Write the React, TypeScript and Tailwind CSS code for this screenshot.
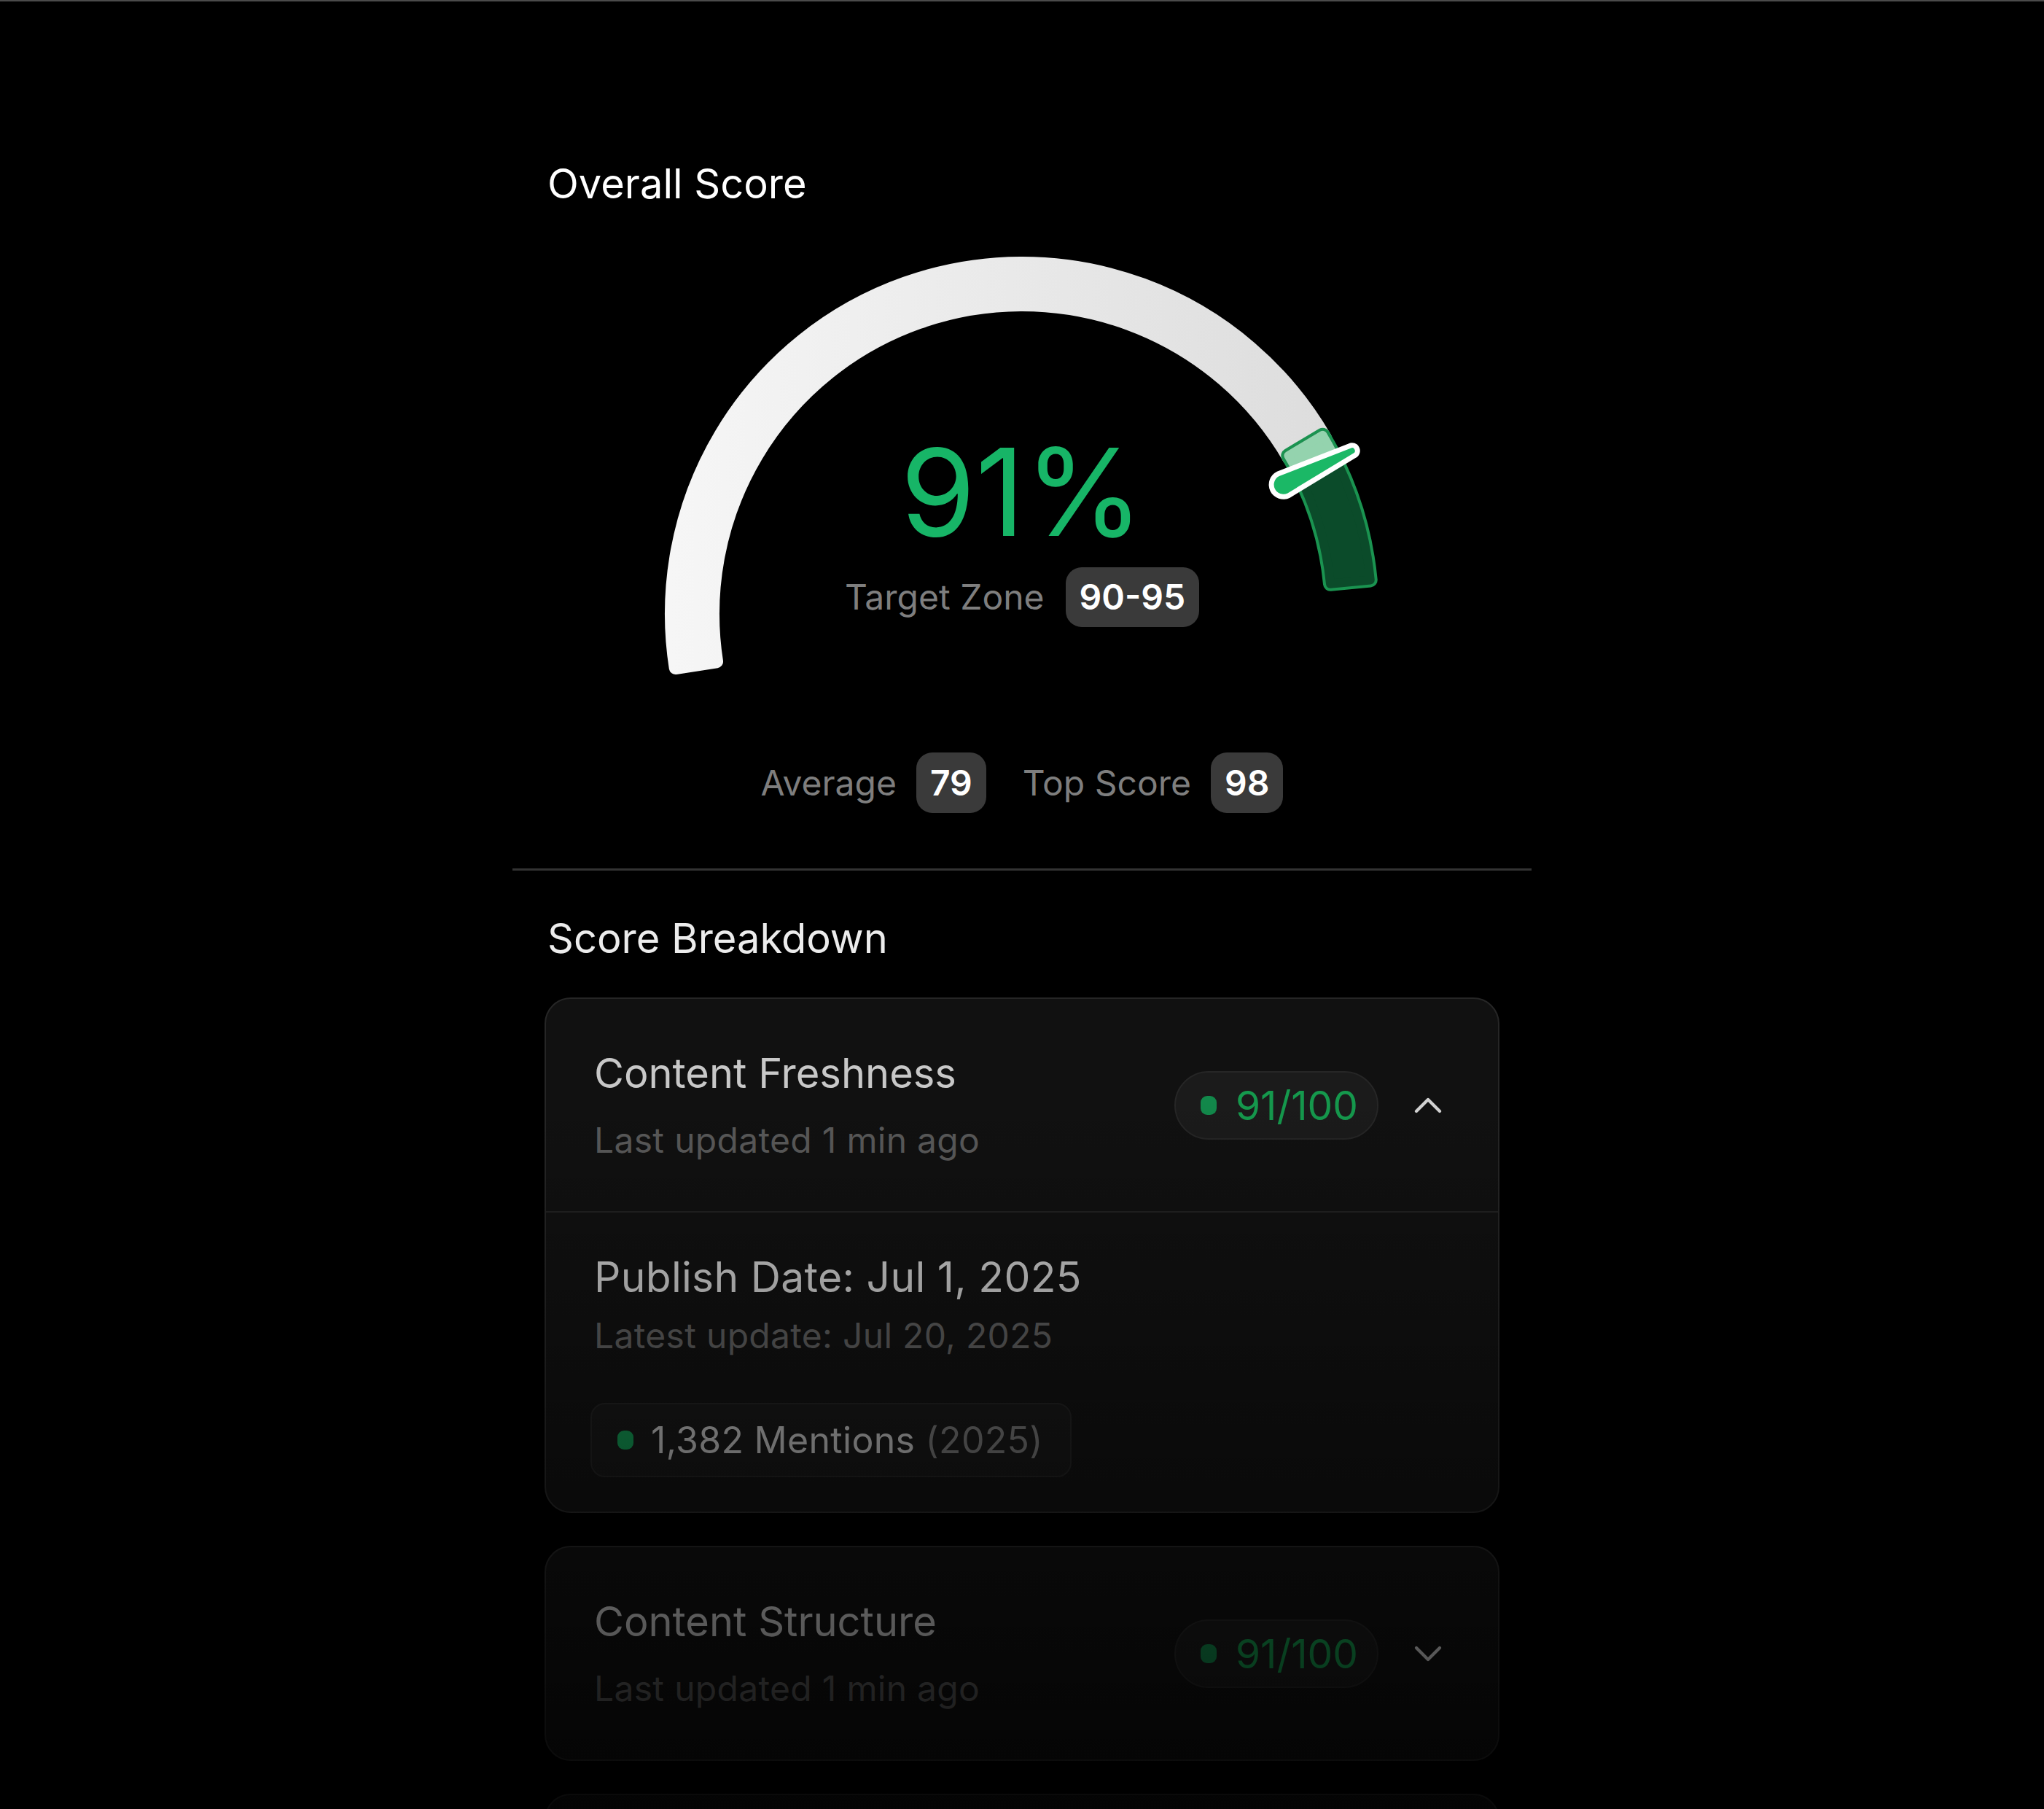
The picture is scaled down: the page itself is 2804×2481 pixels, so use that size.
import React from "react";
import { ChevronUp, ChevronDown } from "lucide-react";

const CX = 500;
const CY = 512;

const pt = (r: number, a: number) => {
  const t = (a * Math.PI) / 180;
  return [CX + r * Math.cos(t), CY - r * Math.sin(t)];
};

// annular sector from angle a1 down to a2 (clockwise on screen), shrunk by `inset`
function sector(r1: number, r2: number, a1: number, a2: number, inset = 0) {
  const ri = r1 + inset;
  const ro = r2 - inset;
  const rm = (r1 + r2) / 2;
  const da = ((inset / rm) * 180) / Math.PI;
  const s = a1 - da;
  const e = a2 + da;
  const [x1, y1] = pt(ro, s);
  const [x2, y2] = pt(ro, e);
  const [x3, y3] = pt(ri, e);
  const [x4, y4] = pt(ri, s);
  const large = s - e > 180 ? 1 : 0;
  return `M${x1} ${y1} A${ro} ${ro} 0 ${large} 1 ${x2} ${y2} L${x3} ${y3} A${ri} ${ri} 0 ${large} 0 ${x4} ${y4} Z`;
}

function needle(a: number, r1: number, r2: number, w1: number, w2: number) {
  const t = (a * Math.PI) / 180;
  const ux = Math.cos(t);
  const uy = -Math.sin(t);
  const px = -uy;
  const py = ux;
  const bx = CX + r1 * ux;
  const by = CY + r1 * uy;
  const tx = CX + r2 * ux;
  const ty = CY + r2 * uy;
  return `M${bx + px * w1} ${by + py * w1} L${tx + px * w2} ${ty + py * w2} A${w2} ${w2} 0 0 0 ${tx - px * w2} ${ty - py * w2} L${bx - px * w1} ${by - py * w1} A${w1} ${w1} 0 0 0 ${bx + px * w1} ${by + py * w1} Z`;
}

function Gauge() {
  const zone = sector(415, 490, 32, 4.3, 10);
  return (
    <svg width="1000" height="600" viewBox="0 0 1000 600" className="block">
      <defs>
        <linearGradient id="track" x1="0" y1="0" x2="1" y2="0">
          <stop offset="0" stopColor="#f6f6f6" />
          <stop offset="1" stopColor="#dddddd" />
        </linearGradient>
      </defs>
      <path
        d={sector(415, 490, 190, 29, 9)}
        fill="url(#track)"
        stroke="url(#track)"
        strokeWidth={18}
        strokeLinejoin="round"
      />
      <path d={zone} fill="#1a9350" stroke="#1a9350" strokeWidth={20} strokeLinejoin="round" />
      <path d={zone} fill="#0b4b2a" stroke="#0b4b2a" strokeWidth={12} strokeLinejoin="round" />
      <path
        d={sector(415, 490, 32, 25.5, 10)}
        fill="#94d3ae"
        stroke="#94d3ae"
        strokeWidth={12}
        strokeLinejoin="round"
      />
      <path d={needle(26.3, 400, 505, 20, 11)} fill="#ffffff" />
      <path d={needle(26.3, 400, 505, 13, 4)} fill="#1bb866" />
    </svg>
  );
}

function Badge({ children }: { children: React.ReactNode }) {
  return (
    <span className="rounded-[22px] bg-[#3a3a3a] px-[19px] py-[12px] text-[48px] leading-[58px] font-semibold text-white">
      {children}
    </span>
  );
}

function ScorePill() {
  return (
    <div className="flex items-center gap-[26px] rounded-full border-2 border-[#262626] bg-[#1b1b1b] pl-[34px] pr-[26px] py-[14px]">
      <span className="h-[26px] w-[22px] shrink-0 rounded-[9px] bg-[#12894b]" />
      <span className="text-[55px] leading-[62px] text-[#15994d]">91/100</span>
    </div>
  );
}

function CardHeader({ title, open }: { title: string; open: boolean }) {
  return (
    <div className="flex h-[291px] items-center justify-between pl-[66px] pr-[64px]">
      <div className="flex flex-col">
        <div className="text-[56px] leading-[68px] text-[#c8c8c8]">{title}</div>
        <div className="mt-[28px] text-[48px] leading-[60px] tracking-[0.3px] text-[#5a5a5a]">Last updated 1 min ago</div>
      </div>
      <div className="flex items-center gap-[36px]">
        <ScorePill />
        {open ? (
          <ChevronUp size={64} strokeWidth={1.6} className="text-[#d4d4d4]" />
        ) : (
          <ChevronDown size={64} strokeWidth={1.6} className="text-[#d4d4d4]" />
        )}
      </div>
    </div>
  );
}

export default function App() {
  return (
    <div className="relative h-[2481px] overflow-hidden border-t-2 border-[#4b4b4b] bg-black font-[Inter,'Noto_Sans',sans-serif]">
      <div className="mx-auto w-[1398px]">
        <h1 className="pt-[215px] pl-[48px] text-[56px] leading-[70px] font-normal text-white">Overall Score</h1>

        <div className="relative mt-[43px] flex justify-center">
          <Gauge />
          <div className="absolute inset-x-0 top-[262px] flex flex-col items-center">
            <div className="text-[166px] leading-none text-[#17b567]">91%</div>
            <div className="mt-[20px] flex items-center gap-[29px]">
              <span className="text-[48px] leading-[58px] text-[#7e7e7e]">Target Zone</span>
              <Badge>90-95</Badge>
            </div>
          </div>
        </div>

        <div className="mt-[115px] flex items-center justify-center">
          <span className="text-[48px] leading-[58px] text-[#7e7e7e]">Average</span>
          <span className="ml-[27px]">
            <Badge>79</Badge>
          </span>
          <span className="ml-[50px] text-[48px] leading-[58px] text-[#7e7e7e]">Top Score</span>
          <span className="ml-[27px]">
            <Badge>98</Badge>
          </span>
        </div>

        <div className="mt-[88px] h-[3px] bg-[#333333]" />

        <h2 className="mt-[58px] pl-[48px] text-[56px] leading-[70px] font-normal text-[#ececec]">Score Breakdown</h2>

        <div className="mt-[46px] flex flex-col gap-[45px] px-[44px]">
          <div className="overflow-hidden rounded-[36px] border-2 border-[#262626] bg-[#111111]">
            <CardHeader title="Content Freshness" open />
            <div className="border-t-2 border-[#222222] pl-[66px] pt-[54px] pb-[47px]">
              <div className="text-[57px] leading-[70px] tracking-[0.3px] text-[#c8c8c8]">Publish Date: Jul 1, 2025</div>
              <div className="mt-[15px] text-[48px] leading-[60px] tracking-[0.3px] text-[#5b5b5b]">
                Latest update: Jul 20, 2025
              </div>
              <div className="-ml-[5px] mt-[62px] inline-flex items-center gap-[24px] rounded-[20px] border-2 border-[#202020] bg-[#161616] pl-[35px] pr-[37px] py-[19px]">
                <span className="h-[26px] w-[22px] shrink-0 rounded-[9px] bg-[#12894b]" />
                <span className="text-[50px] leading-[60px] tracking-[0.3px] text-[#adadad]">
                  1,382 Mentions <span className="text-[#6a6a6a]">(2025)</span>
                </span>
              </div>
            </div>
          </div>

          <div className="overflow-hidden rounded-[36px] border-2 border-[#262626] bg-[#111111]">
            <CardHeader title="Content Structure" open={false} />
          </div>

          <div className="h-[291px] rounded-[36px] border-2 border-[#262626] bg-[#111111]" />
        </div>
      </div>

      <div className="pointer-events-none absolute inset-x-0 bottom-0 h-[981px] bg-linear-to-b from-transparent to-black/75" />
    </div>
  );
}
